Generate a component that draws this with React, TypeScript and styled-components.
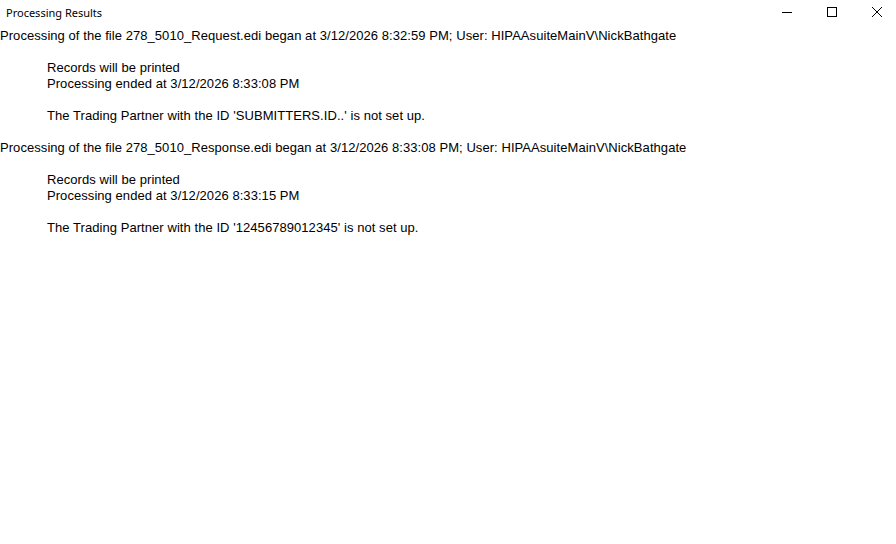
import React from "react";
import styled, { createGlobalStyle } from "styled-components";

const Global = createGlobalStyle`
  html, body { margin: 0; padding: 0; background: #ffffff; }
  body { width: 896px; height: 544px; overflow: hidden; }
`;

const Window = styled.div`
  width: 896px;
  height: 544px;
  background: #ffffff;
  display: flex;
  flex-direction: column;
  overflow: hidden;
`;

const TitleBar = styled.div`
  height: 24px;
  display: flex;
  align-items: center;
  justify-content: space-between;
`;

const Title = styled.div`
  padding-left: 6px;
  font-family: "Noto Sans", "Open Sans", sans-serif;
  font-size: 11px;
  color: #000;
`;

const Controls = styled.div`
  display: flex;
  height: 24px;
  margin-right: -3px;
`;

const ControlButton = styled.div`
  width: 45px;
  height: 24px;
  display: flex;
  align-items: center;
  justify-content: center;
`;

const Content = styled.div`
  padding-top: 4px;
  font-family: "Liberation Sans", Arial, sans-serif;
  font-size: 13px;
  letter-spacing: 0.06px;
  line-height: 16px;
  color: #000;
`;

const Line = styled.div<{ $indent?: boolean }>`
  height: 16px;
  white-space: pre;
  padding-left: ${(p) => (p.$indent ? "47px" : "0")};
`;

type Entry = { text: string; indent?: boolean };

const lines: Entry[] = [
  { text: "Processing of the file 278_5010_Request.edi began at 3/12/2026 8:32:59 PM; User: HIPAAsuiteMainV\\NickBathgate" },
  { text: "" },
  { text: "Records will be printed", indent: true },
  { text: "Processing ended at 3/12/2026 8:33:08 PM", indent: true },
  { text: "" },
  { text: "The Trading Partner with the ID 'SUBMITTERS.ID..' is not set up.", indent: true },
  { text: "" },
  { text: "Processing of the file 278_5010_Response.edi began at 3/12/2026 8:33:08 PM; User: HIPAAsuiteMainV\\NickBathgate" },
  { text: "" },
  { text: "Records will be printed", indent: true },
  { text: "Processing ended at 3/12/2026 8:33:15 PM", indent: true },
  { text: "" },
  { text: "The Trading Partner with the ID '12456789012345' is not set up.", indent: true },
];

export default function App() {
  return (
    <Window>
      <Global />
      <TitleBar>
        <Title>Processing Results</Title>
        <Controls>
          <ControlButton>
            <svg width="10" height="10" viewBox="0 0 10 10">
              <line x1="0" y1="5.5" x2="10" y2="5.5" stroke="#000" strokeWidth="1" />
            </svg>
          </ControlButton>
          <ControlButton>
            <svg width="10" height="10" viewBox="0 0 10 10">
              <rect x="0.5" y="0.5" width="9" height="9" fill="none" stroke="#000" strokeWidth="1" />
            </svg>
          </ControlButton>
          <ControlButton>
            <svg width="10" height="10" viewBox="0 0 10 10">
              <path d="M0 0 L10 10 M10 0 L0 10" stroke="#000" strokeWidth="1" />
            </svg>
          </ControlButton>
        </Controls>
      </TitleBar>
      <Content>
        {lines.map((l, i) => (
          <Line key={i} $indent={l.indent}>
            {l.text}
          </Line>
        ))}
      </Content>
    </Window>
  );
}
